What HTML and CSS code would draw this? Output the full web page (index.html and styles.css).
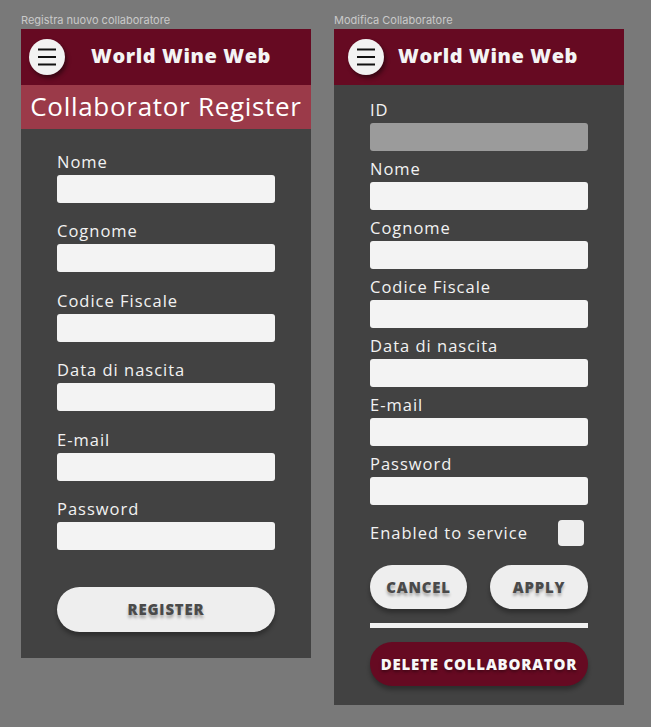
FILE: index.html
```html
<!DOCTYPE html>
<html lang="it">
<head>
<meta charset="utf-8">
<title>World Wine Web</title>
<link rel="stylesheet" href="styles.css">
</head>
<body>
<div class="canvas">
  <section class="frame">
    <div class="caption">Registra nuovo collaboratore</div>
    <div class="phone phone-register">
      <header class="topbar topbar-left">
        <button class="menu" aria-label="menu">
          <svg width="18" height="18" viewBox="0 0 18 18"><rect x="0" y="0.5" width="18" height="2" fill="#111"/><rect x="0" y="8" width="18" height="2" fill="#111"/><rect x="0" y="15.5" width="18" height="2" fill="#111"/></svg>
        </button>
        <div class="brand brand-left">World Wine Web</div>
      </header>
      <div class="subtitle">Collaborator Register</div>
      <div class="body body-register">
        <div class="fields fields-register">
          <label class="field"><span class="lbl">Nome</span><span class="input"></span></label>
          <label class="field"><span class="lbl">Cognome</span><span class="input"></span></label>
          <label class="field"><span class="lbl">Codice Fiscale</span><span class="input"></span></label>
          <label class="field"><span class="lbl">Data di nascita</span><span class="input"></span></label>
          <label class="field"><span class="lbl">E-mail</span><span class="input"></span></label>
          <label class="field"><span class="lbl">Password</span><span class="input"></span></label>
        </div>
        <button class="pill pill-register">REGISTER</button>
      </div>
    </div>
  </section>

  <section class="frame">
    <div class="caption">Modifica Collaboratore</div>
    <div class="phone phone-edit">
      <header class="topbar topbar-right">
        <button class="menu" aria-label="menu">
          <svg width="18" height="18" viewBox="0 0 18 18"><rect x="0" y="0.5" width="18" height="2" fill="#111"/><rect x="0" y="8" width="18" height="2" fill="#111"/><rect x="0" y="15.5" width="18" height="2" fill="#111"/></svg>
        </button>
        <div class="brand brand-right">World Wine Web</div>
      </header>
      <div class="body body-edit">
        <div class="fields fields-edit">
          <label class="field"><span class="lbl">ID</span><span class="input input-disabled"></span></label>
          <label class="field"><span class="lbl">Nome</span><span class="input"></span></label>
          <label class="field"><span class="lbl">Cognome</span><span class="input"></span></label>
          <label class="field"><span class="lbl">Codice Fiscale</span><span class="input"></span></label>
          <label class="field"><span class="lbl">Data di nascita</span><span class="input"></span></label>
          <label class="field"><span class="lbl">E-mail</span><span class="input"></span></label>
          <label class="field"><span class="lbl">Password</span><span class="input"></span></label>
        </div>
        <div class="check-row">
          <span class="lbl">Enabled to service</span>
          <span class="checkbox"></span>
        </div>
        <div class="btn-row">
          <button class="pill pill-cancel">CANCEL</button>
          <button class="pill pill-apply">APPLY</button>
        </div>
        <div class="divider"></div>
        <button class="pill pill-delete">DELETE COLLABORATOR</button>
      </div>
    </div>
  </section>
</div>
</body>
</html>
```

FILE: styles.css
```css
* { box-sizing: border-box; }
html, body { margin: 0; padding: 0; }
body {
  background: #797979;
  width: 651px;
  height: 727px;
  overflow: hidden;
  font-family: "Open Sans", "Noto Sans", sans-serif;
}
.canvas {
  display: flex;
  gap: 23px;
  padding: 14px 0 0 21px;
}
.frame { width: 290px; display: flex; flex-direction: column; }
.caption {
  font-family: "Inter", "Liberation Sans", sans-serif;
  font-size: 11px;
  line-height: 13px;
  height: 13px;
  margin-bottom: 2px;
  color: #c9c9c9;
}
.phone { background: #424242; width: 290px; }
.topbar {
  height: 56px;
  background: #660a22;
  display: flex;
  align-items: center;
}
.topbar-left { padding-left: 8px; }
.topbar-right { padding-left: 14px; }
.menu {
  width: 36px;
  height: 36px;
  border-radius: 50%;
  border: none;
  padding: 0;
  background: #f2f2f2;
  box-shadow: 2px 3px 4px rgba(0,0,0,0.45);
  display: flex;
  align-items: center;
  justify-content: center;
}
.menu svg { display: block; }
.brand {
  color: #f4f4f4;
  font-weight: 800;
  font-size: 20px;
  line-height: 24px;
  margin-bottom: 2px;
  letter-spacing: 0.6px;
  white-space: nowrap;
}
.brand-left { margin-left: 26px; }
.brand-right { margin-left: 14px; }
.subtitle {
  height: 44px;
  background: #9b3a49;
  color: #fff;
  font-size: 26px;
  letter-spacing: 0.7px;
  line-height: 42px;
  text-align: center;
  white-space: nowrap;
}
.body { padding: 0 36px; display: flex; flex-direction: column; }
.body-register { padding-top: 23px; padding-bottom: 26px; }
.body-edit { padding-top: 15px; padding-bottom: 19px; }
.fields { display: flex; flex-direction: column; }
.fields-register { gap: 18.4px; }
.fields-edit { gap: 8px; }
.field { display: flex; flex-direction: column; gap: 3px; }
.lbl {
  color: #f2f2f2;
  font-size: 16.5px;
  letter-spacing: 1px;
  line-height: 20px;
  height: 20px;
  white-space: nowrap;
}
.input {
  display: block;
  height: 28px;
  background: #f3f3f3;
  border-radius: 3px;
}
.input-disabled { background: #9b9b9b; }
.pill {
  border: none;
  border-radius: 23px;
  font-family: inherit;
  font-weight: 800;
  font-size: 15px;
  color: #4a4a4a;
  background: #eeeeee;
  text-shadow: 0 3px 3px rgba(0,0,0,0.3);
  box-shadow: 0 4px 4px rgba(0,0,0,0.3);
  padding: 0;
  letter-spacing: 0.8px;
}
.pill-register { margin-top: 37px; height: 45px; width: 100%; }
.check-row {
  margin-top: 15px;
  height: 26px;
  display: flex;
  align-items: center;
  justify-content: space-between;
  padding-right: 4px;
}
.checkbox {
  width: 26px;
  height: 26px;
  background: #eeeeee;
  border-radius: 4px;
}
.btn-row {
  margin-top: 19px;
  display: flex;
  justify-content: space-between;
}
.pill-cancel, .pill-apply { height: 44px; width: 97px; }
.pill-apply { width: 98px; }
.divider {
  margin-top: 14px;
  height: 5px;
  background: #f2f2f2;
}
.pill-delete {
  margin-top: 14px;
  height: 44px;
  width: 100%;
  background: #660a22;
  color: #f8f8f8;
  text-shadow: 0 2px 3px rgba(0,0,0,0.35);
}
```
